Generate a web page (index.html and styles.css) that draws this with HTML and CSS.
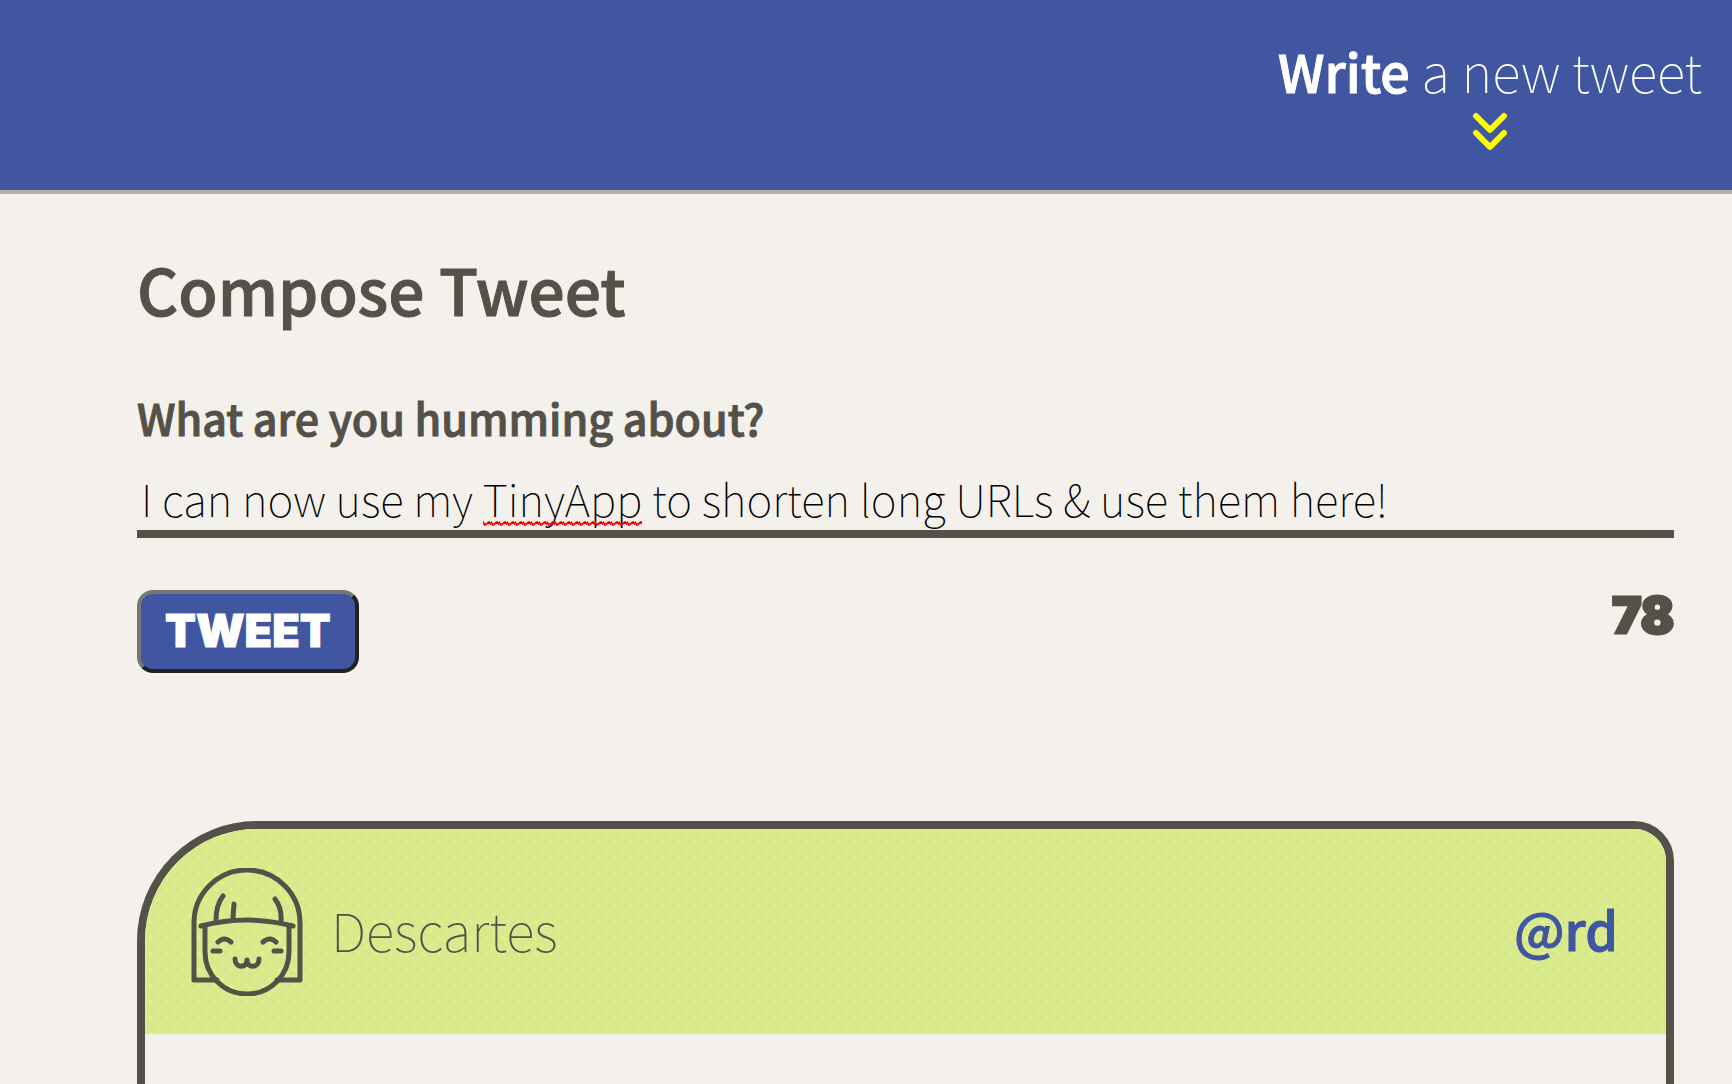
FILE: index.html
```html
<!DOCTYPE html>
<html lang="en">
<head>
<meta charset="utf-8">
<title>Tweeter</title>
<link rel="stylesheet" href="styles.css">
</head>
<body>
<nav class="nav">
  <button class="nav-compose" type="button">
    <span><strong>Write</strong> a new tweet</span>
    <svg class="chevrons" viewBox="0 0 36 40" aria-hidden="true"><path d="M4 5l14 14 14-14M4 22l14 14 14-14"/></svg>
  </button>
</nav>
<main class="container">
  <section class="new-tweet">
    <h2 class="title">Compose Tweet</h2>
    <form class="form">
      <label class="label" for="tweet-text">What are you humming about?</label>
      <div class="field">
        <textarea class="text" id="tweet-text" name="text" rows="1" spellcheck="false">I can now use my TinyApp to shorten long URLs &amp; use them here!</textarea>
        <span class="misspelling" aria-hidden="true"></span>
      </div>
      <div class="actions">
        <button class="submit" type="submit">TWEET</button>
        <output class="counter" for="tweet-text">78</output>
      </div>
    </form>
  </section>
  <article class="tweet">
    <header class="tweet-header">
      <svg class="avatar" viewBox="0 0 128 128" aria-hidden="true">
        <path d="M34 112H11V55a53 53 0 0 1 106 0V112H94"/>
        <path d="M22 58V84a42 42 0 0 0 84 0V58"/>
        <path d="M18 58Q64 46 110 58"/>
        <path d="M40 28Q33 37 33 52M51 36L50 50M92 31Q99 40 98 53"/>
        <path d="M35 74Q41 68 48 74M80 74Q87 68 93 74M30 83H37M91 83H98"/>
        <path d="M52 91C52 100 64 101 64 92C64 101 76 100 76 91"/>
      </svg>
      <span class="name">Descartes</span>
      <a class="handle" href="#">@rd</a>
    </header>
    <div class="tweet-body"></div>
  </article>
</main>
</body>
</html>
```
FILE: styles.css
```css
* {
  box-sizing: border-box;
}

body {
  margin: 0;
  background: #f4f1ec;
  color: #545149;
  font-family: "Noto Sans CJK SC", "Noto Sans", sans-serif;
  font-weight: 100;
}

.nav {
  display: flex;
  justify-content: flex-end;
  align-items: flex-start;
  height: 194px;
  padding: 38px 30px 0;
  background: #4056a1;
  border-bottom: 4px solid #b8afab;
}

.nav-compose {
  display: flex;
  flex-direction: column;
  align-items: center;
  gap: 8px;
  padding: 0;
  border: 0;
  background: none;
  color: #fff;
  font: inherit;
  font-size: 53px;
  line-height: 64px;
}

strong,
.title,
.label,
.handle {
  font-weight: 500;
  -webkit-text-stroke: 1px;
}

strong {
  font-size: 52px;
}

.chevrons {
  width: 36px;
  height: 40px;
  fill: none;
  stroke: #ff0;
  stroke-width: 6;
  stroke-linecap: round;
  stroke-linejoin: round;
}

.container {
  padding: 50px 58px 0 137px;
}

.title {
  margin: 0 0 53px;
  font-size: 64px;
  line-height: 88px;
}

.form {
  display: flex;
  flex-direction: column;
}

.label {
  font-size: 43px;
  line-height: 64px;
}

.field {
  position: relative;
  display: flex;
  margin-top: 17px;
}

.text {
  width: 100%;
  height: 72px;
  padding: 4px 4px 0;
  overflow: hidden;
  border: 0;
  border-bottom: 8px solid #545149;
  background: transparent;
  color: #000;
  font: inherit;
  font-size: 44px;
  line-height: 56px;
  resize: none;
}

.misspelling {
  position: absolute;
  left: 346px;
  bottom: 12px;
  width: 159px;
  height: 5px;
  background: url("data:image/svg+xml,%3Csvg xmlns='http://www.w3.org/2000/svg' width='8' height='5'%3E%3Cpath d='M-1 0L2 4L6 1L9 4' fill='none' stroke='red' stroke-width='2'/%3E%3C/svg%3E");
}

.actions {
  display: flex;
  justify-content: space-between;
  align-items: flex-start;
  margin-top: 52px;
}

.submit {
  height: 83px;
  padding: 0 24px 2px;
  border: 4px solid;
  border-color: #767676 #212121 #212121 #767676;
  border-radius: 16px;
  background: #4056a1;
  color: #fff;
  font-family: Inter, sans-serif;
  font-size: 45px;
  font-weight: 900;
  line-height: 72px;
  -webkit-text-stroke: 1px;
}

.counter {
  font-family: Inter, sans-serif;
  font-size: 49px;
  font-weight: 900;
  line-height: 52px;
  -webkit-text-stroke: 3px;
}

.tweet {
  margin-top: 148px;
  overflow: hidden;
  border: 8px solid #545149;
  border-radius: 120px 40px 40px 40px;
}

.tweet-header {
  display: flex;
  align-items: center;
  height: 205px;
  padding: 0 48px 0 38px;
  background: #d9ea8d url("data:image/svg+xml,%3Csvg xmlns='http://www.w3.org/2000/svg' width='16' height='16'%3E%3Cg fill='%23d7e891'%3E%3Ccircle cx='6' cy='6' r='3'/%3E%3Ccircle cx='13' cy='13' r='3'/%3E%3C/g%3E%3Cg stroke='%23e0f680' stroke-width='2' stroke-linecap='round'%3E%3Cpath d='M12 7l2-2M5 12l2 2'/%3E%3C/g%3E%3C/svg%3E");
  font-size: 53px;
  line-height: 64px;
}

.name,
.handle {
  padding-bottom: 5px;
}

.avatar {
  width: 128px;
  height: 128px;
  margin-right: 20px;
  fill: none;
  stroke: #545149;
  stroke-width: 5;
  stroke-linecap: round;
  stroke-linejoin: round;
}

.handle {
  margin-left: auto;
  color: #4056a1;
  font-size: 52px;
  text-decoration: none;
}

.tweet-body {
  height: 240px;
}
```
